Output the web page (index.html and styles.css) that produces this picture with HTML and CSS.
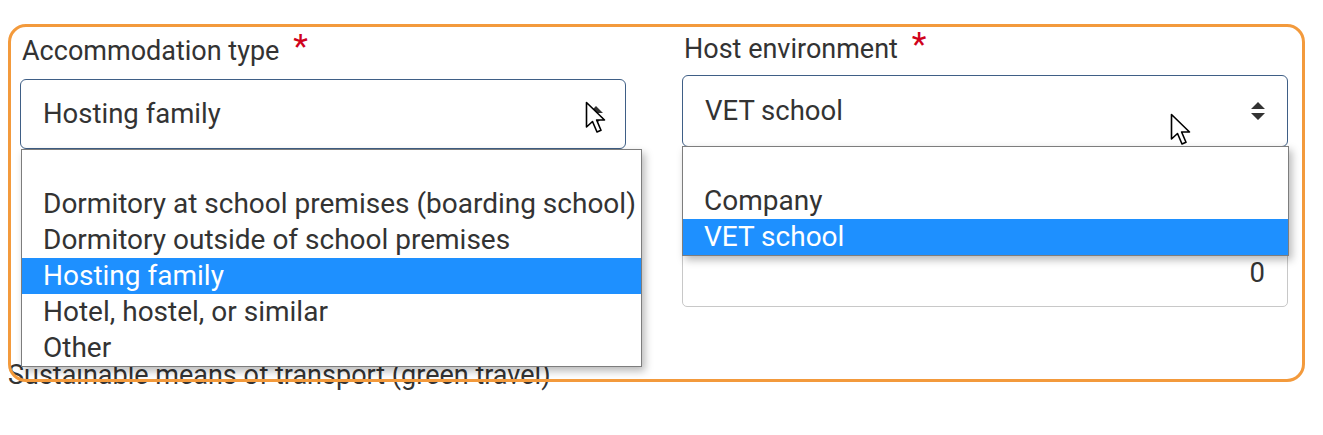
FILE: index.html
```html
<!DOCTYPE html>
<html lang="en">
<head>
<meta charset="utf-8">
<title>Form</title>
<link rel="stylesheet" href="styles.css">
</head>
<body>
<div class="page">
  <div class="row">
    <div class="col col-left">
      <div class="label">Accommodation type <span class="req">*</span></div>
      <div class="select">
        <span class="value">Hosting family</span>
        <svg class="updown" width="16" height="20" viewBox="0 0 16 20"><path d="M1 8 L8 1 L15 8 Z M1 12 L8 19 L15 12 Z" fill="#333"/></svg>
        <svg class="cursor cursor-left" width="22" height="34" viewBox="0 0 22 34"><path d="M1.5 1.5 L1.5 26 L7.5 20.5 L12 31 L16 29.3 L11.6 19 L19.5 19 Z" fill="#fff" stroke="#000" stroke-width="1.6" stroke-linejoin="round"/></svg>
        <ul class="dropdown dropdown-left">
          <li class="opt empty"></li>
          <li class="opt">Dormitory at school premises (boarding school)</li>
          <li class="opt">Dormitory outside of school premises</li>
          <li class="opt sel">Hosting family</li>
          <li class="opt">Hotel, hostel, or similar</li>
          <li class="opt">Other</li>
        </ul>
      </div>
    </div>
    <div class="col col-right">
      <div class="label">Host environment <span class="req">*</span></div>
      <div class="select">
        <span class="value">VET school</span>
        <svg class="updown" width="16" height="20" viewBox="0 0 16 20"><path d="M1 8 L8 1 L15 8 Z M1 12 L8 19 L15 12 Z" fill="#333"/></svg>
        <svg class="cursor cursor-right" width="22" height="34" viewBox="0 0 22 34"><path d="M1.5 1.5 L1.5 26 L7.5 20.5 L12 31 L16 29.3 L11.6 19 L19.5 19 Z" fill="#fff" stroke="#000" stroke-width="1.6" stroke-linejoin="round"/></svg>
        <ul class="dropdown dropdown-right">
          <li class="opt empty"></li>
          <li class="opt">Company</li>
          <li class="opt sel">VET school</li>
        </ul>
      </div>
      <div class="input">0</div>
    </div>
  </div>
  <div class="section-title">Sustainable means of transport (green travel)</div>
  <div class="highlight"></div>
</div>
</body>
</html>
```

FILE: styles.css
```css
* { box-sizing: border-box; }
html, body { margin: 0; padding: 0; background: #fff; }
body {
  font-family: Roboto, "Liberation Sans", sans-serif;
  color: #333;
  font-size: 27px;
}
.page {
  position: relative;
  width: 1323px;
  height: 435px;
  overflow: hidden;
}
.row {
  display: flex;
  align-items: flex-start;
  gap: 56px;
  padding-left: 20px;
}
.col { width: 606px; }
.col-left { padding-top: 36px; }
.col-right { padding-top: 34px; }
.label {
  line-height: 30px;
  height: 30px;
  padding-left: 2px;
  font-size: 27px;
  color: #333;
  white-space: nowrap;
}
.req {
  color: #d0021b;
  margin-left: 7px;
  font-size: 34px;
  line-height: 20px;
  vertical-align: 2px;
}
.select {
  position: relative;
  margin-top: 13px;
  height: 70px;
  border: 1.5px solid #3f5f86;
  border-radius: 6px;
  display: flex;
  align-items: center;
  padding-left: 22px;
  background: #fff;
  font-size: 27.5px;
}
.col-right .select { margin-top: 11px; height: 72px; }
.value { line-height: 30px; }
.updown {
  position: absolute;
  right: 21px;
  top: 25px;
}
.cursor { position: absolute; z-index: 5; }
.cursor-left { left: 564px; top: 21px; }
.cursor-right { left: 487px; top: 37px; }
.dropdown {
  position: absolute;
  left: 0;
  margin: 0;
  padding: 0;
  list-style: none;
  background: #fff;
  border: 1px solid #7d7d7d;
  box-shadow: 3px 4px 8px rgba(0, 0, 0, 0.28);
  z-index: 3;
  font-size: 28px;
}
.dropdown-left { left: 0; width: 621px; top: 69px; }
.dropdown-right { left: -1px; width: 607px; top: 70px; }
.opt {
  height: 36px;
  line-height: 36px;
  padding-left: 21px;
  white-space: nowrap;
  color: #333;
}
.opt.sel { background: #1e90ff; color: #fff; }
.input {
  margin-top: 90px;
  height: 70px;
  border: 1px solid #c8c8c8;
  border-radius: 5px;
  display: flex;
  align-items: center;
  justify-content: flex-end;
  padding-right: 22px;
  font-size: 27.5px;
}
.section-title {
  padding-left: 8px;
  margin-top: 53px;
  line-height: 30px;
  white-space: nowrap;
}
.highlight {
  position: absolute;
  left: 8px;
  top: 24px;
  width: 1297px;
  height: 358px;
  border: 3px solid #f39a3c;
  border-radius: 18px;
  z-index: 10;
  pointer-events: none;
}
```
